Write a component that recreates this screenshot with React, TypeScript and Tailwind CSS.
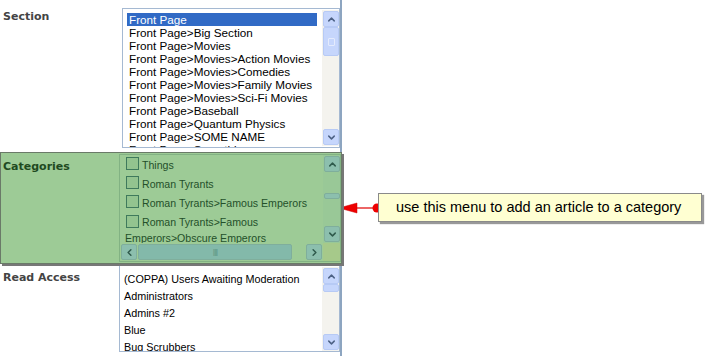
import { ChevronUp, ChevronDown, ChevronLeft, ChevronRight } from 'lucide-react'

const sections = [
  'Front Page',
  'Front Page>Big Section',
  'Front Page>Movies',
  'Front Page>Movies>Action Movies',
  'Front Page>Movies>Comedies',
  'Front Page>Movies>Family Movies',
  'Front Page>Movies>Sci-Fi Movies',
  'Front Page>Baseball',
  'Front Page>Quantum Physics',
  'Front Page>SOME NAME',
  'Front Page>Something',
]

const groups = ['(COPPA) Users Awaiting Moderation', 'Administrators', 'Admins #2', 'Blue', 'Bug Scrubbers']

function ScrollBtn({ dir, green }: { dir: 'up' | 'down' | 'left' | 'right'; green?: boolean }) {
  const Icon = { up: ChevronUp, down: ChevronDown, left: ChevronLeft, right: ChevronRight }[dir]
  return (
    <div
      className={
        green
          ? 'w-[16px] h-[16px] rounded-[2px] border border-[#7fae9c] bg-[#8cbfae] flex items-center justify-center'
          : 'w-[16px] h-[16px] rounded-[2px] border border-[#b7caf5] bg-[#c6d6fc] flex items-center justify-center'
      }
    >
      <Icon size={11} strokeWidth={3.2} className={green ? 'text-[#2f5a4c]' : 'text-[#4d6185]'} />
    </div>
  )
}

function VScroll({ thumbTop, thumbH, green }: { thumbTop: number; thumbH: number; green?: boolean }) {
  return (
    <div className={green ? 'w-[17px] h-full flex flex-col bg-[#99c897] p-px' : 'w-[17px] h-full flex flex-col bg-[#f4f3ee] p-px'}>
      <ScrollBtn dir="up" green={green} />
      <div className="flex-1 relative">
        <div
          className={
            green
              ? 'absolute left-0 w-[16px] rounded-[2px] border border-[#7fae9c] bg-[#8cbfae]'
              : 'absolute left-0 w-[16px] rounded-[2px] border border-[#b7caf5] bg-[#c6d6fc] flex items-center justify-center'
          }
          style={{ top: thumbTop, height: thumbH }}
        >
          {!green && thumbH > 20 && <div className="w-[7px] h-[8px] border border-[#e4ebfd] rounded-[1px]" />}
        </div>
      </div>
      <ScrollBtn dir="down" green={green} />
    </div>
  )
}

export default function App() {
  return (
    <div className="relative w-[706px] h-[356px] bg-white overflow-hidden font-['Liberation_Sans',sans-serif] text-[11.7px]">
      <div className="w-[342px] h-full border-r-2 border-[#8da5c0] flex flex-col">
        {/* Section */}
        <div className="flex h-[152px] shrink-0">
          <div className="w-[122px] pl-[3px] pt-[9px] font-['DejaVu_Sans',sans-serif] font-bold text-[11px] text-[#444]">Section</div>
          <div className="mt-[8px] w-[218px] h-[140px] border border-[#a5b9d2] flex overflow-hidden">
            <div className="flex-1 pl-[4px] pt-[4px] overflow-hidden">
              {sections.map((s, i) => (
                <div
                  key={s}
                  className={i === 0 ? 'h-[13px] leading-[13px] w-[190px] pl-[2px] bg-[#316ac5] text-white' : 'h-[13px] leading-[13px] pl-[2px] text-black whitespace-nowrap'}
                >
                  {s}
                </div>
              ))}
            </div>
            <div className="py-px">
              <VScroll thumbTop={0} thumbH={29} />
            </div>
          </div>
        </div>

        {/* Categories, highlighted */}
        <div className="flex h-[112px] shrink-0 bg-[#9dcb96] border border-[#6a7a68] shadow-[2px_2px_0_#777] relative z-10 -mr-[2px]">
          <div className="w-[118px] pl-[2px] pt-[6px] font-['DejaVu_Sans',sans-serif] font-bold text-[11px] text-[#1f4a1f]">Categories</div>
          <div className="mt-[1px] mb-[1px] flex-1 border border-[#82b283] flex flex-col">
            <div className="flex flex-1 min-h-0">
              <div className="flex-1 pl-[6px] pt-[2px] text-[10.6px] text-[#24502a] overflow-hidden">
                {['Things', 'Roman Tyrants', 'Roman Tyrants>Famous Emperors'].map(c => (
                  <div key={c} className="h-[19px] flex items-start whitespace-nowrap">
                    <span className="w-[13px] h-[13px] border border-[#3f7a5c] bg-[#93c48f] shrink-0 mr-[3px]" />
                    <span className="leading-[15px] pt-[1px]">{c}</span>
                  </div>
                ))}
                <div className="leading-[16px] -ml-[1px]">
                  <span className="inline-block w-[13px] h-[13px] border border-[#3f7a5c] bg-[#93c48f] mr-[3px] align-[-2px] ml-px" />
                  Roman Tyrants&gt;Famous
                  <br />
                  Emperors&gt;Obscure Emperors
                </div>
              </div>
              <VScroll thumbTop={21} thumbH={6} green />
            </div>
            <div className="h-[18px] flex">
              <div className="flex-1 flex items-center px-px gap-px">
                <ScrollBtn dir="left" green />
                <div className="flex-1 h-[16px] rounded-[2px] border border-[#7fae9c] bg-[#83b9aa] flex items-center justify-center text-[8px] text-[#5f9484] tracking-[-1px]">
                  ||||
                </div>
                <div className="w-[12px]" />
                <ScrollBtn dir="right" green />
              </div>
              <div className="w-[17px] bg-[#a6c98a]" />
            </div>
          </div>
        </div>

        {/* Read Access */}
        <div className="flex flex-1 min-h-0">
          <div className="w-[119px] pl-[3px] pt-[6px] font-['DejaVu_Sans',sans-serif] font-bold text-[11px] text-[#444]">Read Access</div>
          <div className="mt-[1px] mb-[4px] flex-1 border border-[#a5b9d2] border-t-0 flex overflow-hidden">
            <div className="flex-1 pl-[4px] pt-[8px] overflow-hidden text-[10.8px]">
              {groups.map(g => (
                <div key={g} className="h-[17px] leading-[13px] text-black whitespace-nowrap">
                  {g}
                </div>
              ))}
            </div>
            <div className="pt-[2px]">
              <VScroll thumbTop={0} thumbH={8} />
            </div>
          </div>
        </div>
      </div>

      {/* callout */}
      <div className="absolute left-[339px] top-[200px] flex items-center">
        <svg width="42" height="16" viewBox="0 0 42 16">
          <polygon points="0,8 18,3 18,13" fill="#ee0000" stroke="#cc0000" strokeWidth="0.5" />
          <line x1="17" y1="8" x2="38" y2="8" stroke="#e00000" strokeWidth="1.2" />
          <circle cx="38" cy="8" r="4.5" fill="#ee0000" />
        </svg>
      </div>
      <div className="absolute left-[378px] top-[193px] w-[324px] h-[29px] bg-[#ffffd2] border border-[#8a8a8a] shadow-[2px_2px_1px_#999] pl-[17px] flex items-center font-['Liberation_Sans',sans-serif] text-[14.5px] text-black whitespace-nowrap">
        use this menu to add an article to a category
      </div>
    </div>
  )
}
